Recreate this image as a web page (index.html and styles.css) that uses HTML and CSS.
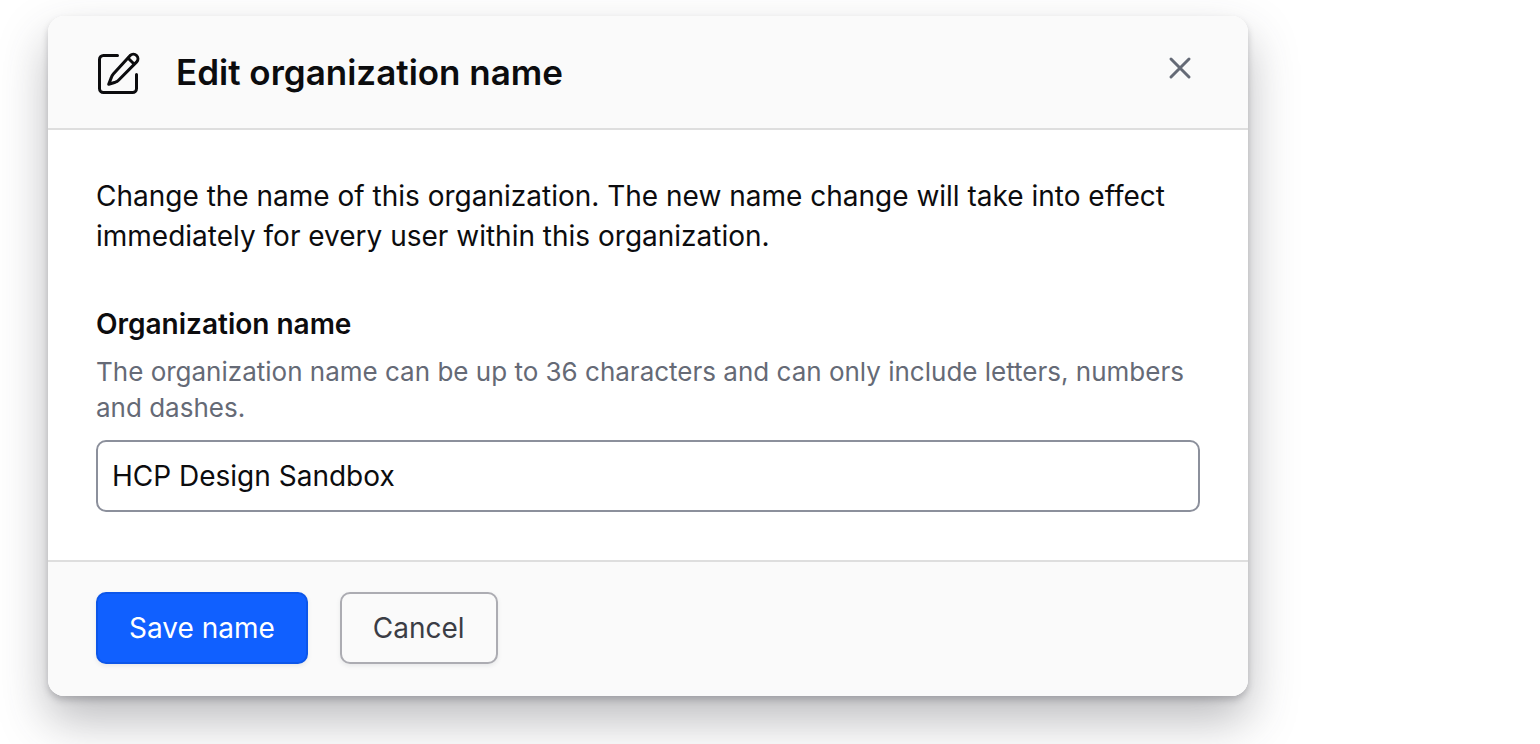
FILE: index.html
```
<!DOCTYPE html>
<html lang="en">
<head>
<meta charset="utf-8">
<title>Edit organization name</title>
<link rel="stylesheet" href="styles.css">
</head>
<body>
<form class="modal" role="dialog" aria-labelledby="modal-title">
  <header class="modal-header">
    <svg class="modal-icon" viewBox="0 0 48 48" fill="none" stroke="currentColor" stroke-width="3" stroke-linecap="round" stroke-linejoin="round" aria-hidden="true">
      <path d="M21.5 7.5h-14a4 4 0 0 0-4 4v29a4 4 0 0 0 4 4h29a4 4 0 0 0 4-4V26.500"/>
      <path d="M34.200 7.400a4.600 4.600 0 0 1 6.500 6.500L22.500 32.200a9 9 0 0 1-3.200 2L12.700 36.200l2.600-6.600a9 9 0 0 1 2-3.600z"/>
      <path d="M32.200 10.200l5.600 5.600"/>
    </svg>
    <h1 class="modal-title" id="modal-title">Edit organization name</h1>
    <button class="close-button" type="button" aria-label="Close">
      <svg class="close-icon" viewBox="0 0 32 32" fill="none" stroke="currentColor" stroke-width="3" stroke-linecap="round" aria-hidden="true"><path d="M7 7l18 18M25 7L7 25"/></svg>
    </button>
  </header>
  <div class="modal-body">
    <p class="description">Change the name of this organization. The new name change will take into effect immediately for every user within this organization.</p>
    <div class="field">
      <label class="field-label" for="org-name">Organization name</label>
      <p class="field-help" id="org-help">The organization name can be up to 36 characters and can only include letters, numbers and dashes.</p>
      <input class="field-input" id="org-name" type="text" value="HCP Design Sandbox" aria-describedby="org-help">
    </div>
  </div>
  <footer class="modal-footer">
    <button class="button button-primary" type="submit">Save name</button>
    <button class="button button-secondary" type="button">Cancel</button>
  </footer>
</form>
</body>
</html>
```
FILE: styles.css
```
* { box-sizing: border-box; }
body {
  min-height: 100vh;
  margin: 0;
  padding: 16px 48px 48px;
  background: #fff;
  color: #0c0c0e;
  font-family: Inter, "Liberation Sans", sans-serif;
}
h1, p { margin: 0; }
.modal {
  max-width: 1200px;
  border-radius: 16px;
  background: #fff;
  box-shadow: 0 4px 6px rgba(59, 61, 69, 0.25), 0 24px 48px rgba(59, 61, 69, 0.35);
}
.modal-header {
  display: flex;
  align-items: center;
  gap: 32px;
  padding: 32px 48px;
  border-bottom: 2px solid #dedede;
  border-radius: 16px 16px 0 0;
  background: #fafafa;
}
.modal-icon { width: 48px; height: 48px; }
.modal-title {
  flex: 1;
  font-size: 35px;
  line-height: 48px;
  font-weight: 600;
}
.close-button {
  display: flex;
  align-self: flex-start;
  padding: 4px;
  border: 0;
  background: none;
  color: #656a76;
}
.close-icon { width: 32px; height: 32px; }
.modal-body { padding: 46px 48px 48px; }
.description { font-size: 28px; line-height: 40px; }
.field { display: flex; flex-direction: column; margin-top: 48px; }
.field-label { font-size: 28px; line-height: 40px; font-weight: 600; }
.field-help { margin: 10px 0 14px; color: #656a76; font-size: 26px; line-height: 36px; }
.field-input {
  width: 100%;
  height: 72px;
  padding: 0 14px;
  border: 2px solid #8c909c;
  border-radius: 10px;
  background: #fff;
  color: #0c0c0e;
  font: inherit;
  font-size: 28px;
}
.modal-footer {
  display: flex;
  gap: 32px;
  padding: 30px 48px 32px;
  border-top: 2px solid #dedede;
  border-radius: 0 0 16px 16px;
  background: #fafafa;
}
.button {
  height: 72px;
  padding: 0 31px;
  border: 2px solid;
  border-radius: 10px;
  font: inherit;
  font-size: 28px;
  box-shadow: 0 2px 4px rgba(101, 106, 118, 0.12);
}
.button-primary { border-color: #0c56e9; background: #1060ff; color: #fff; }
.button-secondary { border-color: #acacb2; background: #fafafa; color: #3b3d45; }
```
